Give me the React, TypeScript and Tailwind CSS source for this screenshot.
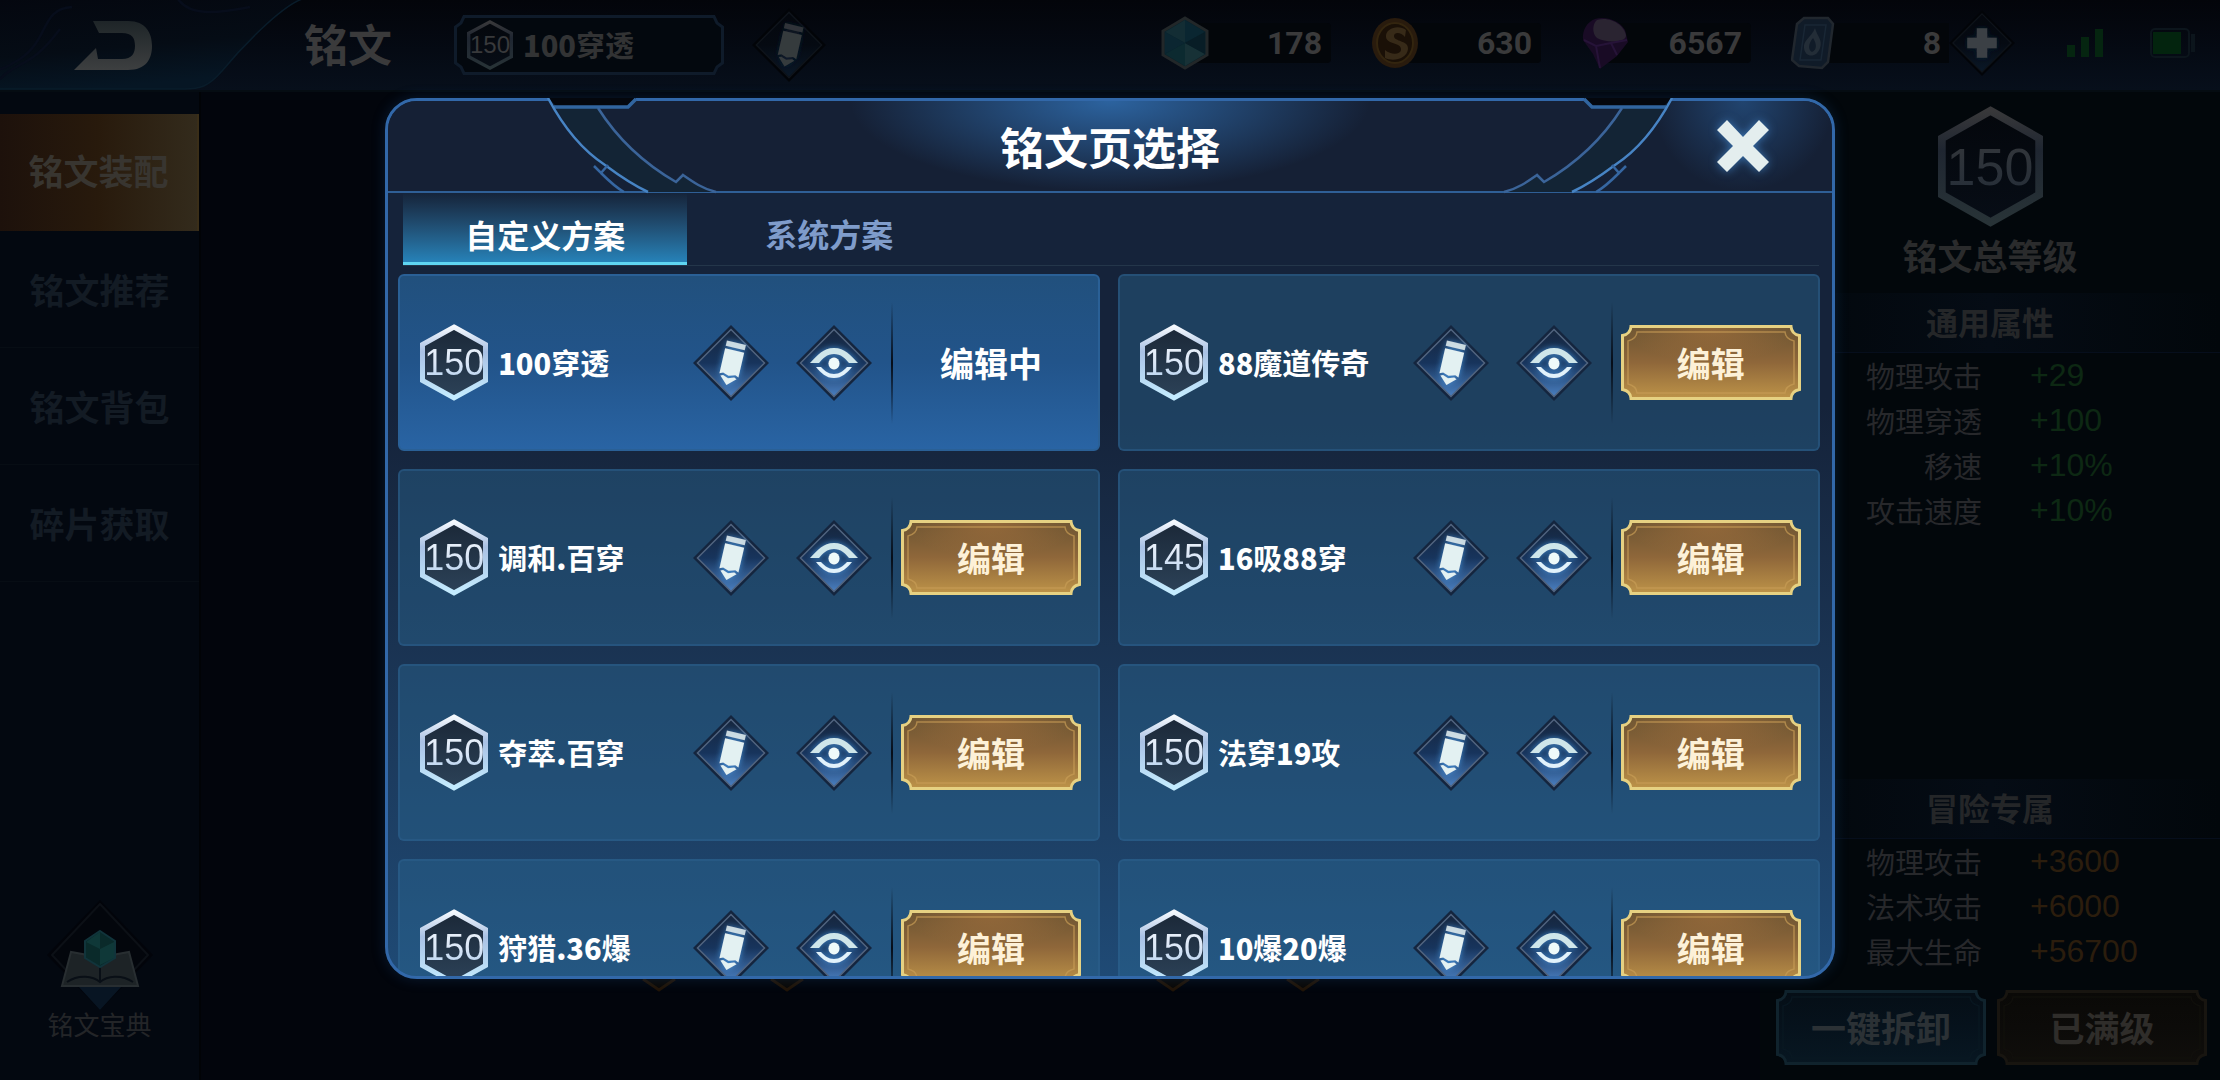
import React from "react";

const plansLeftToRight = [
  { level: "150", name: "100穿透", current: true },
  { level: "150", name: "88魔道传奇" },
  { level: "150", name: "调和.百穿" },
  { level: "145", name: "16吸88穿" },
  { level: "150", name: "夺萃.百穿" },
  { level: "150", name: "法穿19攻" },
  { level: "150", name: "狩猎.36爆" },
  { level: "150", name: "10爆20爆" },
];

function HexShape({ className, dim }: { className: string; dim?: boolean }) {
  const id = dim ? "hexDim" : "hexLit";
  return (
    <svg viewBox="0 0 68 77" preserveAspectRatio="none" className={className} aria-hidden="true">
      <defs>
        <linearGradient id={id} x1="0" y1="0" x2="0" y2="1">
          <stop offset="0" stopColor={dim ? "#38383a" : "#f4f8fd"} />
          <stop offset="0.35" stopColor={dim ? "#1f2631" : "#a9c1e4"} />
          <stop offset="1" stopColor={dim ? "#283337" : "#c4ecff"} />
        </linearGradient>
        <linearGradient id={id + "Fill"} x1="0" y1="0" x2="0" y2="1">
          <stop offset="0" stopColor={dim ? "#04070c" : "#1b2838"} />
          <stop offset="1" stopColor={dim ? "#070d16" : "#2c4258"} />
        </linearGradient>
      </defs>
      <path
        d="M34 3 L65.500 20.500 V56.500 L34 74 L2.500 56.500 V20.500 Z"
        fill={`url(#${id}Fill)`}
        stroke={`url(#${id})`}
        strokeWidth="5"
      />
    </svg>
  );
}

function Diamond({ dim, children }: { dim?: boolean; children: React.ReactNode }) {
  const id = dim ? "diaDim" : "diaLit";
  return (
    <svg viewBox="0 0 76 76" className="h-full w-full" aria-hidden="true">
      <defs>
        <linearGradient id={id} x1="0" y1="0" x2="0" y2="1">
          <stop offset="0" stopColor={dim ? "#04070d" : "#16263e"} />
          <stop offset="0.5" stopColor={dim ? "#050a12" : "#17345c"} />
          <stop offset="1" stopColor={dim ? "#0a1828" : "#4a7fc0"} />
        </linearGradient>
        <filter id={id + "Glow"} x="-50%" y="-50%" width="200%" height="200%">
          <feDropShadow dx="0" dy="0" stdDeviation="3" floodColor={dim ? "#0c2035" : "#4ba3ee"} floodOpacity="0.8" />
        </filter>
      </defs>
      <path d="M38 0 L76 38 L38 76 L0 38 Z" fill={dim ? "#020408" : "#14253e"} />
      <path d="M38 4.500 L71.500 38 L38 71.500 L4.500 38 Z" fill={`url(#${id})`} stroke={dim ? "#0e131a" : "#51647f"} strokeWidth="1.500" />
      <g filter={`url(#${id}Glow)`}>{children}</g>
    </svg>
  );
}

function PencilIcon({ dim }: { dim?: boolean }) {
  const c = dim ? "#353a3d" : "#e3f1f2";
  return (
    <Diamond dim={dim}>
      <g transform="rotate(13 38 38)">
        <path d="M29 17 H48.500 V22.500 H29 Z" fill={c} opacity="0.85" />
        <path d="M29 25 H48.500 V50.500 L45 49 L38.500 51 L32.500 49 L29 50.500 Z" fill={c} />
        <path d="M30.500 52.500 L33 51.500 L38.500 53.500 L44.500 51.500 L47 52.500 L38.500 60.500 Z" fill={c} />
      </g>
    </Diamond>
  );
}

function EyeIcon() {
  return (
    <Diamond>
      <path d="M14 38 C22 30 27 23 38 23 C49 23 54 30 62 38 L53 38 C49 33 45 29 38 29 C31 29 27 33 23 38 Z" fill="#cfe6ea" />
      <path d="M20 42 L25 42 C29 46 32 49 38 49 C44 49 47 46 51 42 L56 42 C51 48 46 53 38 53 C30 53 25 48 20 42 Z" fill="#e1f2fb" />
      <ellipse cx="38" cy="38.500" rx="5.500" ry="6" fill="#eefafa" />
    </Diamond>
  );
}

type Tone = "gold" | "dimBlue" | "dimGold";
const tones: Record<Tone, { edge: string; top: string; bottom: string; mid: string; inner: string }> = {
  gold: { edge: "#e6d182", top: "#6b5432", mid: "#8f673a", bottom: "#bd9348", inner: "#c79c56" },
  dimBlue: { edge: "#10232d", top: "#050e16", mid: "#06121c", bottom: "#081722", inner: "#0a1a24" },
  dimGold: { edge: "#181510", top: "#0a0907", mid: "#0c0b09", bottom: "#100e0b", inner: "#13110d" },
};

function FrameButton({ tone, className, children }: { tone: Tone; className: string; children: React.ReactNode }) {
  const t = tones[tone];
  const w = tone === "gold" ? 180 : 210;
  const r = w - 1.5;
  const outline = `M10 1.500 H${r - 8.5} Q${r - 8} 9 ${r} 10.500 V64.500 Q${r - 8} 66 ${r - 8.5} 73.500 H10 Q9.500 66 1.500 64.500 V10.500 Q9.500 9 10 1.500 Z`;
  return (
    <button className={`relative flex h-[75px] items-center justify-center ${className}`}>
      <svg viewBox={`0 0 ${w} 75`} preserveAspectRatio="none" className="absolute inset-0 h-full w-full" aria-hidden="true">
        <defs>
          <linearGradient id={`btn-${tone}`} x1="0" y1="0" x2="0" y2="1">
            <stop offset="0" stopColor={t.top} />
            <stop offset="0.5" stopColor={t.mid} />
            <stop offset="1" stopColor={t.bottom} />
          </linearGradient>
          <radialGradient id={`btnGlow-${tone}`} cx="0.5" cy="0" r="0.5">
            <stop offset="0" stopColor="#b37840" stopOpacity={tone === "gold" ? 0.55 : 0} />
            <stop offset="1" stopColor="#b37840" stopOpacity="0" />
          </radialGradient>
        </defs>
        <path d={outline} fill={`url(#btn-${tone})`} />
        <path d={outline} fill={`url(#btnGlow-${tone})`} />
        <path
          d={`M16 7 H${r - 14.5} Q${r - 14} 14 ${r - 5.5} 16 V59 Q${r - 14} 61 ${r - 14.5} 68 H16 Q15.500 61 7 59 V16 Q15.500 14 16 7 Z`}
          fill="none"
          stroke={t.inner}
          strokeWidth="1.500"
          opacity="0.7"
        />
        <path d={outline} fill="none" stroke={t.edge} strokeWidth="3" />
      </svg>
      <span className="relative">{children}</span>
    </button>
  );
}

function PlanName({ text }: { text: string }) {
  return (
    <>
      {text.split(/([\d.]+)/).map((part, i) =>
        i % 2 ? (
          <span key={i} className="font-black">
            {part}
          </span>
        ) : (
          part
        ),
      )}
    </>
  );
}

function PlanCard({ level, name, current }: { level: string; name: string; current?: boolean }) {
  const surface = current
    ? "border-[#2a6096] bg-linear-to-b from-[#21507d] via-[#22548a] to-[#2964a4]"
    : "border-[#2c5f8d]/50 bg-[#2a6a94]/42";
  return (
    <li className={`flex h-[177px] items-center rounded-md border-2 pr-[17px] pl-5 ${surface}`}>
      <div className="relative h-[77px] w-[68px] shrink-0">
        <HexShape className="absolute inset-0 h-full w-full" />
        <span className="relative flex h-full items-center justify-center bg-linear-to-b from-white via-[#dbe7f7] to-[#8fbbe6] bg-clip-text font-['Liberation_Sans',sans-serif] text-4xl text-transparent">
          {level}
        </span>
      </div>
      <span className="ml-[10px] min-w-0 flex-1 truncate text-[29px] font-bold text-white">
        <PlanName text={name} />
      </span>
      <button aria-label={`重命名 ${name}`} className="size-[76px] shrink-0">
        <PencilIcon />
      </button>
      <button aria-label={`查看 ${name}`} className="ml-[27px] size-[76px] shrink-0">
        <EyeIcon />
      </button>
      <span className="ml-[19px] h-[122px] w-[2px] shrink-0 bg-linear-to-b from-transparent via-[#060d18] to-transparent" />
      {current ? (
        <span className="ml-2 w-[180px] shrink-0 text-center text-[34px] font-bold text-white">编辑中</span>
      ) : (
        <FrameButton tone="gold" className="ml-2 w-[180px] shrink-0 text-[34px] font-bold text-[#fdf1d8]">
          编辑
        </FrameButton>
      )}
    </li>
  );
}

function HeaderOrnament({ className }: { className: string }) {
  return (
    <svg viewBox="0 0 340 96" className={`pointer-events-none absolute top-0 h-[96px] w-[340px] ${className}`} aria-hidden="true">
      <path d="M164 1 L171 9 C186 36 204 56 223 67 C236 79 248 88 263 94 H331 C318 90 306 82 298 77 L291 84 C256 62 230 36 213 9 Z" fill="#132435" />
      <path d="M162 -1 H252 L243 8 H171 Z" fill="#04070d" />
      <path d="M169 9 H243 L251 1" fill="none" stroke="#31659f" strokeWidth="3.500" />
      <path d="M163 0 C180 32 200 54 220 67 C236 79 248 87 263 94" fill="none" stroke="#4784c4" strokeWidth="2.500" />
      <path d="M209 68 L216 75 L223 67 M216 75 C223 82 230 89 239 94" fill="none" stroke="#3667a2" strokeWidth="2.500" />
      <path d="M213 10 C232 40 258 65 291 84 L298 77 C308 84 318 91 331 94" fill="none" stroke="#3b6499" strokeWidth="2.500" />
    </svg>
  );
}

function StatBand({ children }: { children: React.ReactNode }) {
  return (
    <h2 className="flex h-[60px] items-center justify-center border-b border-[#060e1c] bg-linear-to-r from-[#02070b] via-[#050c15] to-[#02070b] pb-1 text-[32px] font-bold text-[#242628]">
      {children}
    </h2>
  );
}

function StatList({ rows, tone }: { rows: [string, string][]; tone: string }) {
  return (
    <dl className="text-[29px] leading-[45px] text-[#27282b]">
      {rows.map(([k, v]) => (
        <div key={k} className="grid grid-cols-[222px_1fr] gap-x-12">
          <dt className="text-right">{k}</dt>
          <dd className={`font-['Liberation_Sans',sans-serif] text-[32px] ${tone}`}>{v}</dd>
        </div>
      ))}
    </dl>
  );
}

function Currency({ value, children }: { value: string; children: React.ReactNode }) {
  return (
    <div className="flex w-[170px] items-center">
      <svg viewBox="0 0 48 54" className="relative h-[54px] w-12 shrink-0" aria-hidden="true">
        {children}
      </svg>
      <span className="-ml-6 flex h-10 flex-1 items-center justify-end rounded-sm bg-[#03060a] pr-[9px] font-['Roboto',sans-serif] text-[32px] font-bold text-[#3a3a3b]">
        {value}
      </span>
    </div>
  );
}

function TopBar() {
  return (
    <header className="relative flex h-[92px] shrink-0 items-center border-b-2 border-[#050c12] bg-linear-to-b from-[#03050a] to-[#070f1b] pr-6">
      <button aria-label="返回" className="h-[92px] w-[304px] shrink-0">
        <svg viewBox="0 0 304 92" className="h-full w-full" aria-hidden="true">
          <defs>
            <linearGradient id="backFill" x1="0" y1="0" x2="0.300" y2="1">
              <stop offset="0" stopColor="#04070f" />
              <stop offset="0.600" stopColor="#050c15" />
              <stop offset="1" stopColor="#061624" />
            </linearGradient>
            <linearGradient id="backMark" x1="0" y1="0" x2="0" y2="1">
              <stop offset="0" stopColor="#1e2528" />
              <stop offset="1" stopColor="#3d3f40" />
            </linearGradient>
          </defs>
          <path d="M0 0 H302 C280 8 240 50 222 72 C208 88 200 90 184 90 H0 Z" fill="url(#backFill)" />
          <path d="M302 0 C280 8 240 50 222 72 C208 88 200 90 184 90 H0" fill="none" stroke="#091c2a" strokeWidth="1.500" />
          <path d="M72 8 C40 10 50 40 20 60 C10 66 4 70 0 70 M60 30 C30 70 20 60 0 80 M178 0 C190 18 220 14 250 8" fill="none" stroke="#070d1b" strokeWidth="2.500" />
          <path d="M93 22 H128 C146 22 152 34 152 47 C152 60 146 71 128 71 H74 L96 49 L98 60 H122 C132 60 135 54 135 47 C135 39 132 34 122 34 H99 Z" fill="url(#backMark)" />
        </svg>
      </button>
      <h1 className="pb-1 text-[44px] font-bold text-[#3a3a3b]">铭文</h1>
      <div className="relative ml-[62px] flex h-[60px] w-[270px] shrink-0 items-center pl-[13px]">
        <svg viewBox="0 0 270 60" preserveAspectRatio="none" className="absolute inset-0 h-full w-full" aria-hidden="true">
          <path d="M10 1.500 H260 L263 8 L268.500 12 V48 L263 52 L260 58.500 H10 L7 52 L1.500 48 V12 L7 8 Z" fill="#03080e" stroke="#0f1b2a" strokeWidth="3" />
        </svg>
        <span className="relative h-[50px] w-[46px] shrink-0">
          <HexShape dim className="absolute inset-0 h-full w-full" />
          <span className="relative flex h-full items-center justify-center font-['Liberation_Sans',sans-serif] text-2xl text-[#38393b]">150</span>
        </span>
        <span className="relative ml-[10px] text-[29px] font-bold text-[#323334]">
          <PlanName text="100穿透" />
        </span>
      </div>
      <button aria-label="重命名" className="ml-7 size-[74px] shrink-0">
        <PencilIcon dim />
      </button>
      <div className="ml-auto flex items-center pb-1">
        <div className="mr-[18px] flex items-center gap-10">
          <Currency value="178">
            <path d="M24 2 L46 15 V39 L24 52 L2 39 V15 Z" fill="#0a222b" stroke="#222729" strokeWidth="3" />
            <path d="M24 4 L44 16 L24 27 Z" fill="#0a2631" />
            <path d="M24 4 L4 16 L24 27 Z" fill="#132d34" />
            <path d="M4 16 V38 L24 27 Z" fill="#0b2631" />
            <path d="M24 27 V50 L4 38 Z" fill="#0c2a30" />
            <path d="M24 27 V50 L44 38 Z" fill="#173136" />
            <path d="M24 27 L44 16 V38 Z" fill="#081d26" />
          </Currency>
          <Currency value="630">
            <ellipse cx="24" cy="27" rx="23" ry="25" fill="#291b0d" />
            <ellipse cx="24" cy="27" rx="18" ry="20" fill="#1a1007" stroke="#33250f" strokeWidth="2" />
            <path d="M35 14 C28 8 14 12 15 21 C16 29 31 26 30 34 C29 39 20 39 14 34 V42 C22 46 36 43 37 33 C38 24 23 26 23 20 C23 16 30 16 34 21 Z" fill="#372a18" />
          </Currency>
          <Currency value="6567">
            <path d="M14 3 C24 0 38 4 44 14 L47 26 L36 40 L19 53 L12 38 L2 24 C1 14 6 6 14 3 Z" fill="#190b25" />
            <path d="M16 4 C30 0 44 10 45 20 C44 27 24 27 16 22 C11 18 11 8 16 4 Z" fill="#2a2431" />
            <path d="M3 24 L15 30 L19 52 M15 30 L30 27 L36 39 M30 27 L46 24" stroke="#261338" strokeWidth="2" fill="none" />
          </Currency>
          <div className="flex items-center">
            <div className="flex w-[158px] items-center">
              <svg viewBox="0 0 48 54" className="relative h-[54px] w-12 shrink-0" aria-hidden="true">
                <path d="M13 2 H37 L42 8 L37 46 L31 52 L8 50 L1 44 L6 8 Z" fill="#101b28" stroke="#21272e" strokeWidth="2.500" />
                <path d="M14 9 H35 L30 44 H9 Z" fill="none" stroke="#192735" strokeWidth="1.500" />
                <path d="M24 12 C26 20 32 24 29 32 C26 42 14 42 13 32 C12 24 20 22 24 12 Z M22 22 C17 28 17 34 21 36 C26 34 26 28 22 22 Z" fill="#232d37" fillRule="evenodd" />
              </svg>
              <span className="-ml-6 flex h-10 flex-1 items-center justify-end bg-[#03060a] pr-2 font-['Roboto',sans-serif] text-[32px] font-bold text-[#3a3a3b]">8</span>
            </div>
            <button aria-label="添加" className="size-[66px] shrink-0">
              <Diamond dim>
                <path d="M32 21 H44 V32 H55 V44 H44 V55 H32 V44 H21 V32 H32 Z" fill="#3b4145" />
              </Diamond>
            </button>
          </div>
        </div>
        <svg viewBox="0 0 72 28" className="mr-[13px] h-7 w-[72px]" aria-hidden="true">
          <path d="M34 16 H42 V28 H34 Z M48 8 H56 V28 H48 Z M62 0 H70 V28 H62 Z" fill="#052510" />
        </svg>
        <svg viewBox="0 0 46 30" className="ml-8 h-[30px] w-[46px]" aria-hidden="true">
          <rect x="1" y="1" width="38" height="28" rx="4" fill="none" stroke="#0c151c" strokeWidth="2" />
          <rect x="3" y="4" width="28" height="22" fill="#03240e" />
          <rect x="41" y="6" width="4" height="18" fill="#0c151c" />
        </svg>
      </div>
    </header>
  );
}

function SideNav() {
  const items = ["铭文推荐", "铭文背包", "碎片获取"];
  return (
    <aside className="flex w-[201px] shrink-0 flex-col items-stretch border-r-2 border-[#010306] bg-[#030810] pt-[22px] pb-11">
      <nav className="flex flex-col text-[35px] font-bold">
        <button className="h-[117px] border-r-2 border-[#3a2e18] bg-linear-to-r from-[#1d110b] via-[#281a0c] to-[#332b1c] pb-1 text-[#383530]">铭文装配</button>
        {items.map((t) => (
          <button key={t} className="h-[117px] border-b border-[#070d14] text-[#131b24]">
            {t}
          </button>
        ))}
      </nav>
      <button className="mt-auto flex flex-col items-center text-[26px] leading-6 text-[#232528]">
        <svg viewBox="0 0 110 114" className="h-[114px] w-[110px]" aria-hidden="true">
          <path d="M55 2 L108 57 L55 112 L2 57 Z" fill="#02040a" />
          <path d="M55 6 L103 57 L55 108 L7 57 Z" fill="#03060c" stroke="#0c1016" strokeWidth="2" />
          <path d="M33 88 H77 L55 112 Z" fill="#081523" />
          <path d="M26 54 L17 88 H93 L84 54 L62 58 L55 66 L48 58 Z" fill="#1d2326" stroke="#282e31" strokeWidth="2" />
          <path d="M22 84 C34 76 48 78 55 84 C62 78 76 76 88 84 M55 66 V84" fill="none" stroke="#090f16" strokeWidth="2" />
          <path d="M55 33 L70 43 V60 L55 69 L40 60 V43 Z" fill="#0a2a2a" stroke="#11343b" strokeWidth="2" />
          <path d="M55 34 L55 51 L41 44 Z M55 51 L69 44 V60 L55 67 Z" fill="#0f3838" />
        </svg>
        铭文宝典
      </button>
    </aside>
  );
}

function SummaryPanel() {
  return (
    <aside className="flex w-[460px] shrink-0 flex-col bg-[#02070b] pt-[14px] pb-[15px]">
      <div className="relative mx-auto h-[121px] w-[105px]">
        <HexShape dim className="absolute inset-0 h-full w-full" />
        <span className="relative flex h-full items-center justify-center bg-linear-to-b from-[#3c3c3c] to-[#1d2836] bg-clip-text font-['Liberation_Sans',sans-serif] text-[52px] text-transparent">150</span>
      </div>
      <p className="mt-2 mb-[18px] text-center text-[35px] leading-10 font-bold text-[#2a2b2c]">铭文总等级</p>
      <StatBand>通用属性</StatBand>
      <StatList tone="text-[#0d2813]" rows={[["物理攻击", "+29"], ["物理穿透", "+100"], ["移速", "+10%"], ["攻击速度", "+10%"]]} />
      <div className="flex-1" />
      <StatBand>冒险专属</StatBand>
      <StatList tone="text-[#2b1d0d]" rows={[["物理攻击", "+3600"], ["法术攻击", "+6000"], ["最大生命", "+56700"]]} />
      <div className="mt-4 flex gap-[11px] pr-[13px] pl-4 text-[35px] font-bold">
        <FrameButton tone="dimBlue" className="flex-1 text-[#2b3135]">一键拆卸</FrameButton>
        <FrameButton tone="dimGold" className="flex-1 text-[#2f2d2a]">已满级</FrameButton>
      </div>
    </aside>
  );
}

function SlotTip() {
  return (
    <svg viewBox="0 0 40 14" className="h-[14px] w-10" aria-hidden="true">
      <path d="M3 0 H37 L20 13 Z" fill="#0a0806" />
      <path d="M4 1 L20 12 L36 1" fill="none" stroke="#211407" strokeWidth="3" />
    </svg>
  );
}

export default function App() {
  return (
    <div className="relative flex h-screen flex-col overflow-hidden bg-[#02050c] font-['Noto_Sans_CJK_SC',sans-serif]">
      <TopBar />
      <div className="flex min-h-0 flex-1">
        <SideNav />
        <main className="flex min-w-0 flex-1 items-end justify-center pb-[88px]">
          <div className="flex w-[684px] justify-between">
            <div className="flex gap-[88px]">
              <SlotTip />
              <SlotTip />
            </div>
            <div className="flex gap-[90px]">
              <SlotTip />
              <SlotTip />
            </div>
          </div>
        </main>
        <SummaryPanel />
      </div>

      <div className="absolute inset-0 flex justify-center pt-[98px] pb-[101px]">
        <section
          role="dialog"
          aria-labelledby="dialog-title"
          className="relative flex w-[65.3%] flex-col rounded-[32px] bg-[#14243a] shadow-[0_0_14px_rgba(30,80,140,0.3)]"
        >
          <div className="flex min-h-0 flex-1 flex-col overflow-hidden rounded-[32px] border-3 border-[#3268a9] bg-linear-to-b from-[#15233a] from-35% to-[#1f4a75]">
            <header className="relative flex h-[92px] shrink-0 items-center justify-center border-b-2 border-[#2f5f96] bg-[#152035] bg-[radial-gradient(260px_90px_at_50%_0,#2c639f,transparent)]">
              <h2 id="dialog-title" className="text-[44px] font-bold text-white">
                铭文页选择
              </h2>
              <button
                aria-label="关闭"
                className="absolute inset-y-0 right-0 flex w-[178px] items-center justify-center bg-[radial-gradient(90px_90px_at_50%_0,#21446f,transparent)]"
              >
                <svg viewBox="0 0 52 52" className="h-[52px] w-[52px] drop-shadow-[0_0_5px_rgba(80,160,240,0.6)]" aria-hidden="true">
                  <path d="M10 0 L26 17 L42 0 L52 10 L36 26 L52 42 L42 52 L26 36 L10 52 L0 42 L16 26 L0 10 Z" fill="#e4eeee" />
                </svg>
              </button>
            </header>
            <div role="tablist" className="mr-[13px] ml-[15px] flex h-[73px] shrink-0 border-b border-[#24364a] text-[32px] font-bold">
              <button
                role="tab"
                aria-selected="true"
                className="w-[284px] border-b-3 border-[#5fd5f2] bg-linear-to-b from-[#15243a] to-[#2682b8] pt-3 text-white"
              >
                自定义方案
              </button>
              <button role="tab" aria-selected="false" className="w-[284px] pt-2 text-[#7f9ccb]">
                系统方案
              </button>
            </div>
            <ul className="mt-2 mr-3 ml-[10px] grid min-h-0 flex-1 grid-cols-2 content-start gap-[18px]">
              {plansLeftToRight.map((p) => (
                <PlanCard key={p.name} {...p} />
              ))}
            </ul>
          </div>
          <HeaderOrnament className="left-0" />
          <HeaderOrnament className="right-0 -scale-x-100" />
        </section>
      </div>
    </div>
  );
}
